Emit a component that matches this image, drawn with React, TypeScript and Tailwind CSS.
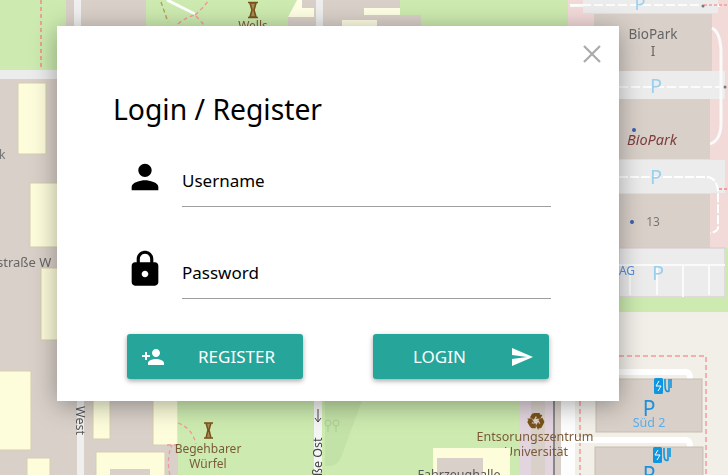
import React from 'react';

const MapBackground = () => (
  <svg className="absolute inset-0 blur-[0.4px]" width="728" height="475" viewBox="0 0 728 475" fontFamily="'Noto Sans', sans-serif">
    <rect width="728" height="475" fill="#d9d0c9" />
    {/* top left park */}
    <rect x="0" y="0" width="66" height="70" fill="#cdebb0" />
    <path d="M41 0V70" stroke="#f08a8a" strokeWidth="1.5" strokeDasharray="4 3" />
    <rect x="0" y="70" width="70" height="9" fill="#ececec" />
    <rect x="74" y="0" width="7" height="30" fill="#f0f0f0" />
    <path d="M146 0H297L288 17V26H146Z" fill="#cdebb0" />
    <path d="M167 0L195 14" stroke="#fff" strokeWidth="3" />
    <path d="M178 24Q186 17 195 15L205 26M195 15Q203 8 209 0" stroke="#ef9a9a" strokeWidth="1.4" strokeDasharray="4 3" fill="none" />
    <path d="M161 2L168 22" stroke="#b89a5a" strokeWidth="1.4" strokeDasharray="4 3" fill="none" />
    <path d="M248 2.500H258M248 17.500H258M250 3L256 3L254 10L256 17H250L252 10Z" stroke="#7a5218" strokeWidth="1.6" fill="#a98a5a" />
    <text x="253" y="30" fontSize="12" fill="#7a5a38" textAnchor="middle">Wells</text>
    <path d="M288 17L297 0H302V8H314V17Z" fill="#ffffe5" />
    <rect x="316" y="0" width="7" height="26" fill="#eeeeee" />
    <rect x="342" y="20" width="35" height="6" fill="#ffffe5" />
    <rect x="364" y="8" width="36" height="7" fill="#ffffe5" />
    <path d="M400 0H570V26H421V15H400Z" fill="#cdebb0" />

    {/* left buildings */}
    <rect x="18" y="83" width="28" height="71" fill="#fdfddc" stroke="#d6cdb0" />
    <rect x="30" y="183" width="30" height="64" fill="#fdfddc" stroke="#d6cdb0" />
    <rect x="41" y="268" width="20" height="72" fill="#fdfddc" stroke="#d6cdb0" />
    <rect x="-1" y="371" width="32" height="79" fill="#fdfddc" stroke="#d6cdb0" />
    <rect x="27" y="458" width="23" height="20" fill="#fdfddc" stroke="#d6cdb0" />
    <rect x="77" y="395" width="7" height="80" fill="#efefef" />
    <rect x="93" y="395" width="17" height="44" fill="#fdfddc" stroke="#d6cdb0" />
    <rect x="153" y="395" width="25" height="50" fill="#fdfddc" stroke="#d6cdb0" />
    <rect x="96" y="452" width="69" height="25" fill="#fdfddc" stroke="#d6cdb0" />
    <rect x="110" y="469" width="40" height="8" fill="#d9d0c9" />
    <text x="-4" y="159" fontSize="12" fill="#777">ik</text>
    <text x="-3" y="267" fontSize="13" fill="#666">straße W</text>
    <text x="0" y="0" fontSize="12.500" fill="#555" transform="translate(76 406) rotate(90)">West</text>

    {/* lower park */}
    <path d="M178 395H314V475H178Z" fill="#cdebb0" />
    <path d="M322 395H519V475H433V448H433V475H322Z" fill="#cdebb0" />
    <path d="M364 395L342 455Q338 466 330 466H325V395Z" fill="#c3e2a7" />
    <rect x="314" y="395" width="8" height="80" fill="#f5f5f5" />
    <path d="M178 423Q192 428 196 444M178 445H165M170 475Q166 458 172 445" stroke="#ef9a9a" strokeWidth="1.3" strokeDasharray="4 3" fill="none" />
    <path d="M204 423H213M204 438H213M206 423H211L209 430L211 438H206L208 430Z" stroke="#7a5218" strokeWidth="1.5" fill="#a98a5a" />
    <text x="208" y="453" fontSize="12" fill="#7a5a38" textAnchor="middle">Begehbarer</text>
    <text x="208" y="468" fontSize="12" fill="#7a5a38" textAnchor="middle">Würfel</text>
    <text x="0" y="0" fontSize="12.500" fill="#444" transform="translate(322 476) rotate(-90)">ße Ost</text>
    <path d="M318 409V422M315 418L318 422L321 418" stroke="#444" strokeWidth="1" fill="none" />
    <path d="M328 432V426M336 432V426" stroke="#a7cf92" strokeWidth="1" />
    <circle cx="328" cy="423" r="3" fill="none" stroke="#a7cf92" />
    <circle cx="336" cy="423" r="3" fill="none" stroke="#a7cf92" />

    {/* right side */}
    <rect x="519" y="395" width="34" height="80" fill="#e3d5df" />
    <rect x="531" y="395" width="14" height="80" fill="#d9d0c9" />
    <rect x="553" y="395" width="2" height="80" fill="#888" />
    <rect x="555" y="395" width="6" height="80" fill="#d9d0c9" />
    <rect x="561" y="395" width="14" height="80" fill="#fdfdfd" />
    <rect x="575" y="0" width="153" height="475" fill="#f2dad9" />
    <rect x="568" y="0" width="9" height="30" fill="#f2dad9" />
    <rect x="570" y="4" width="150" height="3" fill="#fafafa" />
    <rect x="583" y="0" width="135" height="13" fill="#ececec" />
    <path d="M570 5H702" stroke="#fff" strokeWidth="1.5" strokeDasharray="9 3" />
    <text x="640" y="10" fontSize="18" fill="#9ad0ee" textAnchor="middle">P</text>
    <path d="M704 5H728" stroke="#f49b9b" strokeWidth="1.5" strokeDasharray="3 2" />
    <circle cx="703" cy="6" r="1.500" fill="#777" />
    <rect x="594" y="14" width="118" height="57" fill="#d9d0c9" />
    <text x="653" y="39" fontSize="13.500" fill="#666" textAnchor="middle">BioPark</text>
    <text x="653" y="56" fontSize="13.500" fill="#666" textAnchor="middle">I</text>
    <rect x="619" y="71" width="106" height="28" fill="#ececec" />
    <path d="M619 87H725" stroke="#fff" strokeWidth="1.5" strokeDasharray="9 3" />
    <text x="656" y="93" fontSize="20" fill="#9ad0ee" textAnchor="middle">P</text>
    <circle cx="725" cy="87" r="1.500" fill="#777" />
    <path d="M712 28Q720 32 721 50V125Q720 142 709 144" stroke="#fafafa" strokeWidth="3" fill="none" />
    <rect x="619" y="99" width="91" height="60" fill="#d9d0c9" />
    <circle cx="634" cy="130" r="2" fill="#3a5fb0" />
    <text x="652" y="145" fontSize="14.500" fontStyle="italic" fill="#7e3c3c" textAnchor="middle">BioPark</text>
    <rect x="619" y="160" width="106" height="33" fill="#ececec" />
    <path d="M619 177H708Q716 178 718 190V228Q717 232 710 233" stroke="#fff" strokeWidth="2" fill="none" strokeDasharray="9 2" />
    <text x="656" y="184" fontSize="20" fill="#9ad0ee" textAnchor="middle">P</text>
    <path d="M719 189H728" stroke="#f49b9b" strokeWidth="2" strokeDasharray="3 2" />
    <rect x="619" y="194" width="91" height="54" fill="#d9d0c9" />
    <circle cx="632" cy="222" r="2" fill="#3a5fb0" />
    <text x="653" y="226" fontSize="12" fill="#777" textAnchor="middle">13</text>
    <rect x="619" y="248" width="106" height="49" fill="#ececec" stroke="#d6c8cc" />
    <path d="M619 265H725M630 265V295M657 265V295M683 265V297M709 265V295" stroke="#fafafa" strokeWidth="2" fill="none" />
    <text x="627" y="275" fontSize="12" fill="#5a8fd8" textAnchor="middle">AG</text>
    <text x="658" y="280" fontSize="20" fill="#9ad0ee" textAnchor="middle">P</text>
    <rect x="725" y="248" width="3" height="49" fill="#cdebb0" />
    <rect x="619" y="297" width="109" height="15" fill="#cdebb0" />
    <rect x="575" y="312" width="153" height="163" fill="#f2efe9" />
    <rect x="575" y="297" width="44" height="15" fill="#cdebb0" />
    <path d="M619 356H706V475M580 401V475" stroke="#f49b9b" strokeWidth="1.5" strokeDasharray="5 3" fill="none" />
    <path d="M619 372H686Q690 372 690 379" stroke="#fff" strokeWidth="6" strokeLinecap="round" fill="none" />
    <path d="M575 440H686Q690 440 690 447" stroke="#fff" strokeWidth="6" strokeLinecap="round" fill="none" />
    <rect x="596" y="379" width="106" height="53" fill="#d9d0c9" stroke="#c8bdb0" />
    <rect x="595" y="447" width="108" height="30" fill="#d9d0c9" stroke="#c8bdb0" />
    <rect x="654" y="378" width="9" height="16" rx="1.500" fill="#0f96e0" />
    <path d="M659 381L656 386H661L658 391" stroke="#fff" fill="none" />
    <path d="M665 379V385Q665 393 669 391V379M671 379V388" stroke="#0f96e0" strokeWidth="1.6" fill="none" />
    <rect x="653" y="447" width="9" height="16" rx="1.500" fill="#0f96e0" />
    <path d="M658 450L655 455H660L657 460" stroke="#fff" fill="none" />
    <path d="M664 448V454Q664 462 668 460V448M670 448V457" stroke="#0f96e0" strokeWidth="1.6" fill="none" />
    <text x="649" y="416" fontSize="21" fill="#1e90dc" textAnchor="middle">P</text>
    <text x="649" y="427" fontSize="12.500" fill="#5aaeea" textAnchor="middle">Süd 2</text>
    <text x="649" y="482" fontSize="21" fill="#1e90dc" textAnchor="middle">P</text>
    <text x="536" y="429" fontSize="22" fontWeight="700" fill="#7a5218" textAnchor="middle">♻</text>
    <text x="535" y="441" fontSize="12.500" fill="#7a5a38" textAnchor="middle">Entsorungszentrum</text>
    <text x="536" y="456" fontSize="12.500" fill="#7a5a38" textAnchor="middle">Universität</text>
    <rect x="433" y="448" width="77" height="27" fill="#fdfddc" />
    <rect x="437" y="458" width="46" height="20" fill="#d9d0c9" />
    <text x="459" y="479" fontSize="12.500" fill="#555" textAnchor="middle">Fahrzeughalle</text>
  </svg>
);

const UserIcon = () => (
  <svg width="40" height="40" viewBox="0 0 24 24" fill="currentColor">
    <path d="M12 12c2.21 0 4-1.79 4-4s-1.79-4-4-4-4 1.79-4 4 1.790 4 4 4zm0 2c-2.67 0-8 1.34-8 4v2h16v-2c0-2.66-5.33-4-8-4z" />
  </svg>
);

const LockIcon = () => (
  <svg width="40" height="40" viewBox="0 0 24 24" fill="currentColor">
    <path d="M18 8h-1V6c0-2.76-2.24-5-5-5S7 3.24 7 6v2H6c-1.1 0-2 .9-2 2v10c0 1.1.9 2 2 2h12c1.1 0 2-.9 2-2V10c0-1.1-.9-2-2-2zm-6 9c-1.1 0-2-.9-2-2s.9-2 2-2 2 .9 2 2-.9 2-2 2zm3.1-9H8.9V6c0-1.71 1.39-3.1 3.1-3.1 1.71 0 3.1 1.39 3.1 3.1v2z" />
  </svg>
);

const Field = ({ icon, label }: { icon: React.ReactNode; label: string }) => (
  <div className="flex items-start">
    <div className="w-[68px] pl-[11px] pt-[1px] text-black">{icon}</div>
    <div className="w-[369px] h-[51px] border-b border-[#9e9e9e] flex items-center text-[17px] text-black">{label}</div>
  </div>
);

export default function App() {
  return (
    <div className="relative w-[728px] h-[475px] overflow-hidden" style={{ fontFamily: "'Noto Sans', sans-serif" }}>
      <MapBackground />

      <div className="absolute left-[57px] top-[26px] w-[562px] h-[375px] bg-white shadow-[0_4px_24px_rgba(0,0,0,0.35)] pl-[57px]">
        <button className="absolute right-[17px] top-[18px] text-[#aaaaaa]">
          <svg width="20" height="20" viewBox="0 0 20 20" stroke="currentColor" strokeWidth="2.2" fill="none" className="block">
            <path d="M2 2L18 18M18 2L2 18" />
          </svg>
        </button>

        <h1 className="pt-[63px] -ml-px text-[28.3px] leading-[40px] text-black">Login / Register</h1>

        <div className="mt-[27px] flex flex-col gap-[41px]">
          <Field icon={<UserIcon />} label="Username" />
          <Field icon={<LockIcon />} label="Password" />
        </div>

        <div className="mt-[35px] ml-[13px] flex gap-[70px]">
          <button className="relative w-[176px] h-[45px] rounded-[3px] bg-[#26a69a] text-white text-[17px] shadow-[0_2px_5px_rgba(0,0,0,0.35)] flex items-center pl-[71px]">
            <svg className="absolute left-[14px] top-[11px]" width="24" height="24" viewBox="0 0 24 24" fill="currentColor">
              <path d="M15 12c2.21 0 4-1.79 4-4s-1.79-4-4-4-4 1.79-4 4 1.790 4 4 4zm-9-2V7H4v3H1v2h3v3h2v-3h3v-2H6zm9 4c-2.67 0-8 1.34-8 4v2h16v-2c0-2.66-5.33-4-8-4z" />
            </svg>
            REGISTER
          </button>
          <button className="relative w-[176px] h-[45px] rounded-[3px] bg-[#26a69a] text-white text-[17px] shadow-[0_2px_5px_rgba(0,0,0,0.35)] flex items-center pl-[40px]">
            LOGIN
            <svg className="absolute left-[137px] top-[11px]" width="24" height="24" viewBox="0 0 24 24" fill="currentColor">
              <path d="M2.01 21L23 12 2.01 3 2 10l15 2-15 2z" />
            </svg>
          </button>
        </div>
      </div>
    </div>
  );
}
